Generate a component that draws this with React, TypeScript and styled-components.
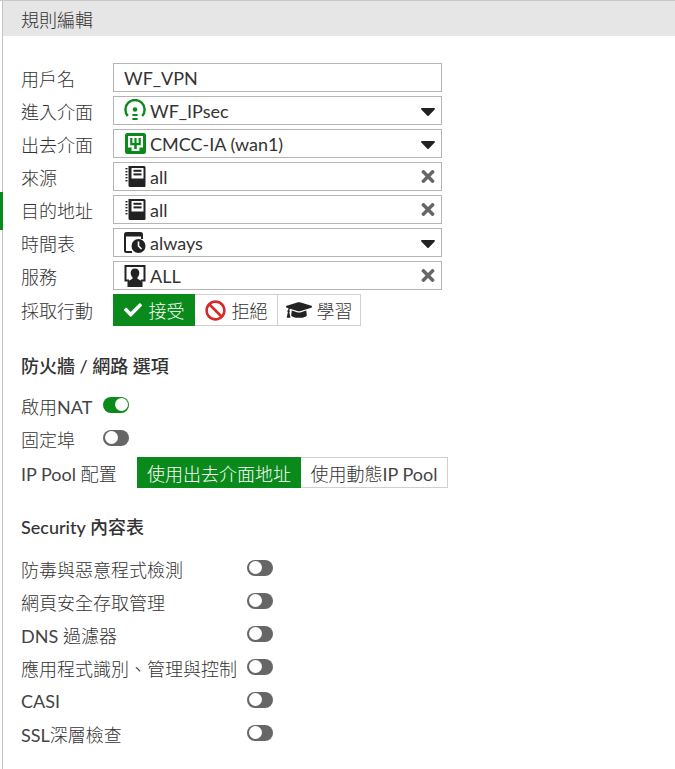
import React from "react";
import styled, { createGlobalStyle } from "styled-components";
import { FaBan, FaCaretDown, FaCheck, FaGraduationCap, FaTimes } from "react-icons/fa";

const GlobalStyle = createGlobalStyle`
  html, body {
    margin: 0;
    background: #fff;
  }
  body {
    font-family: Lato, "Noto Sans CJK TC", sans-serif;
    font-size: 18px;
    font-weight: 300;
    color: #333;
  }
`;

const Page = styled.div`
  width: 675px;
  height: 769px;
  box-sizing: border-box;
  border-top: 1px solid #c8c8c8;
  overflow: hidden;
`;

const Panel = styled.div`
  position: relative;
  height: 100%;
  margin-left: 2px;
  border-left: 1px solid #c4c4c4;
`;

const ActiveMarker = styled.div`
  position: absolute;
  left: -3px;
  top: 191px;
  width: 3px;
  height: 38px;
  background: #0a8a1a;
`;

const Header = styled.div`
  height: 35px;
  background: #e6e6e6;
  padding-left: 18px;
  display: flex;
  align-items: center;
`;

const Body = styled.div`
  padding: 27px 0 0 18px;
  display: flex;
  flex-direction: column;
`;

const Rows = styled.div`
  display: flex;
  flex-direction: column;
  gap: 4px;
`;

const Row = styled.div`
  display: flex;
  align-items: center;
  height: 29px;
`;

const Label = styled.div<{ $width: number }>`
  width: ${({ $width }) => $width}px;
  flex: none;
  white-space: nowrap;
`;

const Latin = styled.span`
  font-weight: 400;
  color: #444;
`;

const Field = styled.div`
  width: 329px;
  height: 29px;
  box-sizing: border-box;
  border: 1px solid #b4b4b4;
  display: flex;
  align-items: center;
  padding: 0 5px 0 10px;
  gap: 4px;
  font-weight: 400;
`;

const FieldText = styled.span`
  flex: 1;
`;

const IconSlot = styled.span`
  width: 22px;
  height: 22px;
  flex: none;
  display: flex;
  align-items: center;
  justify-content: center;
`;

const TrailIcon = styled.span<{ $color: string }>`
  display: flex;
  color: ${({ $color }) => $color};
  width: 16px;
  justify-content: center;
`;

const Segments = styled.div`
  display: flex;
`;

const Segment = styled.div<{ $active?: boolean; $width: number; $height: number; $gap?: number }>`
  width: ${({ $width }) => $width}px;
  height: ${({ $height }) => $height}px;
  box-sizing: border-box;
  display: flex;
  align-items: center;
  justify-content: center;
  gap: ${({ $gap }) => $gap ?? 6}px;
  white-space: nowrap;
  background: ${({ $active }) => ($active ? "#0a8a1a" : "#fff")};
  color: ${({ $active }) => ($active ? "#fff" : "#333")};
  border: 1px solid ${({ $active }) => ($active ? "#0a8a1a" : "#d0d0d0")};
  & + & {
    border-left-width: ${({ $active }) => ($active ? 1 : 0)}px;
  }
`;

const ActionRow = styled(Row)`
  height: 32px;
  margin-top: 4px;
`;

const SectionTitle = styled.div<{ $top: number }>`
  margin-top: ${({ $top }) => $top}px;
  font-weight: 500;
  line-height: 24px;
`;

const OptionRow = styled.div<{ $top: number }>`
  margin-top: ${({ $top }) => $top}px;
  height: 33px;
  display: flex;
  align-items: center;
`;

const SwitchTrack = styled.span<{ $on?: boolean }>`
  position: relative;
  display: block;
  flex: none;
  width: 26px;
  height: 16px;
  margin-top: -2px;
  border-radius: 8px;
  background: ${({ $on }) => ($on ? "#0a8a1a" : "#666")};
  &::after {
    content: "";
    position: absolute;
    top: 1.5px;
    left: ${({ $on }) => ($on ? 11.5 : 1.5)}px;
    width: 13px;
    height: 13px;
    border-radius: 50%;
    background: #fff;
  }
`;

const TunnelIcon = () => (
  <svg width="22" height="24" viewBox="0 0 22 24" fill="none">
    <path d="M3.800 17A9.600 9.600 0 1 1 18.200 17" stroke="#0a8a1a" strokeWidth="2.400" />
    <circle cx="11" cy="10.500" r="2.300" fill="#0a8a1a" />
    <rect x="8.400" y="15" width="5.200" height="2" fill="#0a8a1a" />
    <rect x="8.400" y="19" width="5.200" height="2" fill="#0a8a1a" />
  </svg>
);

const PortIcon = () => (
  <svg width="21" height="21" viewBox="0 0 21 21">
    <rect width="21" height="21" rx="2.500" fill="#0a8a1a" />
    <path d="M3 3h15v11.500h-3.600V18H6.600v-3.500H3z" fill="#fff" />
    <path d="M5.200 5h2.200v5h2V5h2.200v5h2V5h2.200v7.200h-4v3.800H9.200v-3.800h-4z" fill="#0a8a1a" />
  </svg>
);

const AddressIcon = () => (
  <svg width="21" height="21" viewBox="0 0 21 21">
    <path d="M3.500 0H19a1.500 1.500 0 0 1 1.500 1.500V20a1 1 0 0 1-1 1H5a1.500 1.500 0 0 1-1.500-1.500z" fill="#222" />
    <rect x="0.500" y="2" width="2" height="1.400" fill="#222" />
    <rect x="0.500" y="5" width="2" height="1.400" fill="#222" />
    <rect x="0.500" y="8" width="2" height="1.400" fill="#222" />
    <rect x="0.500" y="11" width="2" height="1.400" fill="#222" />
    <rect x="0.500" y="14" width="2" height="1.400" fill="#222" />
    <rect x="6.500" y="2" width="12" height="10.500" fill="#fff" />
    <rect x="8.500" y="3.800" width="8" height="2" fill="#222" />
    <rect x="8.500" y="7.400" width="8" height="2" fill="#222" />
  </svg>
);

const ScheduleIcon = () => (
  <svg width="22" height="21" viewBox="0 0 22 21">
    <path d="M8 20H2.500a1.500 1.500 0 0 1-1.500-1.500V2.500A1.500 1.500 0 0 1 2.500 1h14A1.500 1.500 0 0 1 18 2.500V7" fill="none" stroke="#222" strokeWidth="2" />
    <rect x="1" y="1" width="17" height="3.500" fill="#222" />
    <circle cx="14.500" cy="14" r="7" fill="#222" />
    <path d="M14.500 9.500V14l3 3" fill="none" stroke="#fff" strokeWidth="1.600" />
  </svg>
);

const ServiceIcon = () => (
  <svg width="22" height="22" viewBox="0 0 22 22">
    <path d="M0.500 0h21v16.500h-4.500V14.500h2.500V2h-17v12.500H5v2H0.500z" fill="#222" />
    <path d="M11 3.500c2.900 0 4.300 2.100 4.300 4.500 0 1.800-.8 3.300-1.800 4.200v1.500l5 2.800V22H3.500v-5.500l5-2.800v-1.500C7.500 11.300 6.700 9.800 6.700 8c0-2.400 1.400-4.500 4.300-4.500z" fill="#222" />
  </svg>
);

const fields = [
  { label: "進入介面", icon: <TunnelIcon />, text: "WF_IPsec", trail: "caret" },
  { label: "出去介面", icon: <PortIcon />, text: "CMCC-IA (wan1)", trail: "caret" },
  { label: "來源", icon: <AddressIcon />, text: "all", trail: "clear" },
  { label: "目的地址", icon: <AddressIcon />, text: "all", trail: "clear" },
  { label: "時間表", icon: <ScheduleIcon />, text: "always", trail: "caret" },
  { label: "服務", icon: <ServiceIcon />, text: "ALL", trail: "clear" },
];

const profiles = [
  <>防毒與惡意程式檢測</>,
  <>網頁安全存取管理</>,
  <><Latin>DNS</Latin> 過濾器</>,
  <>應用程式識別、管理與控制</>,
  <Latin>CASI</Latin>,
  <><Latin>SSL</Latin>深層檢查</>,
];

const App = () => (
  <Page>
    <GlobalStyle />
    <Panel>
      <ActiveMarker />
      <Header>規則編輯</Header>
      <Body>
        <Rows>
          <Row>
            <Label $width={92}>用戶名</Label>
            <Field>WF_VPN</Field>
          </Row>
          {fields.map((f) => (
            <Row key={f.label}>
              <Label $width={92}>{f.label}</Label>
              <Field>
                <IconSlot>{f.icon}</IconSlot>
                <FieldText>{f.text}</FieldText>
                {f.trail === "caret" ? (
                  <TrailIcon $color="#222"><FaCaretDown size={24} /></TrailIcon>
                ) : (
                  <TrailIcon $color="#666"><FaTimes size={19} /></TrailIcon>
                )}
              </Field>
            </Row>
          ))}
        </Rows>
        <ActionRow>
          <Label $width={92}>採取行動</Label>
          <Segments>
            <Segment $active $width={82} $height={32} $gap={7}><FaCheck size={18} />接受</Segment>
            <Segment $width={83} $height={32}><FaBan size={21} color="#d32a2a" />拒絕</Segment>
            <Segment $width={83} $height={32} $gap={5}><FaGraduationCap size={26} color="#222" />學習</Segment>
          </Segments>
        </ActionRow>
        <SectionTitle $top={28}>防火牆 / 網路 選項</SectionTitle>
        <OptionRow $top={11}>
          <Label $width={82}>啟用<Latin>NAT</Latin></Label>
          <SwitchTrack $on />
        </OptionRow>
        <OptionRow $top={0}>
          <Label $width={82}>固定埠</Label>
          <SwitchTrack />
        </OptionRow>
        <OptionRow $top={1}>
          <Label $width={116}><Latin>IP Pool</Latin> 配置</Label>
          <Segments>
            <Segment $active $width={164} $height={31}>使用出去介面地址</Segment>
            <Segment $width={147} $height={31}><span>使用動態<Latin>IP Pool</Latin></span></Segment>
          </Segments>
        </OptionRow>
        <SectionTitle $top={26}>Security 內容表</SectionTitle>
        {profiles.map((p, i) => (
          <OptionRow $top={i === 0 ? 13 : 0} key={i}>
            <Label $width={226}>{p}</Label>
            <SwitchTrack />
          </OptionRow>
        ))}
      </Body>
    </Panel>
  </Page>
);

export default App;
